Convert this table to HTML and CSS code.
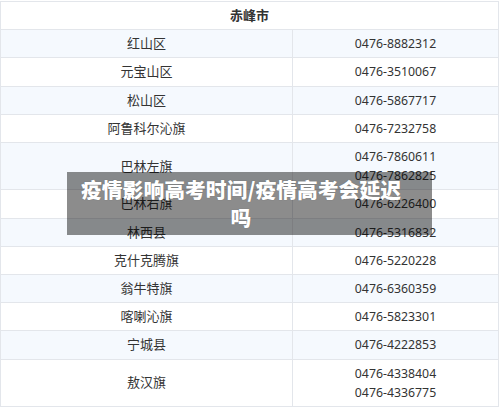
FILE: index.html
```html
<!DOCTYPE html>
<html lang="zh-CN">
<head>
  <meta charset="UTF-8">
  <meta name="viewport" content="width=device-width, initial-scale=1.0">
  <title>疫情影响高考时间/疫情高考会延迟吗</title>
  <link rel="stylesheet" href="styles.css">
</head>
<body>
  <div class="page">
    <table class="tel">
      <thead>
        <tr><th colspan="2">赤峰市</th></tr>
      </thead>
      <tbody>
        <tr><td>红山区</td><td class="num">0476-8882312</td></tr>
        <tr><td>元宝山区</td><td class="num">0476-3510067</td></tr>
        <tr><td>松山区</td><td class="num">0476-5867717</td></tr>
        <tr><td>阿鲁科尔沁旗</td><td class="num">0476-7232758</td></tr>
        <tr><td>巴林左旗</td><td class="num">0476-7860611<br>0476-7862825</td></tr>
        <tr><td>巴林右旗</td><td class="num">0476-6226400</td></tr>
        <tr><td>林西县</td><td class="num">0476-5316832</td></tr>
        <tr><td>克什克腾旗</td><td class="num">0476-5220228</td></tr>
        <tr><td>翁牛特旗</td><td class="num">0476-6360359</td></tr>
        <tr><td>喀喇沁旗</td><td class="num">0476-5823301</td></tr>
        <tr><td>宁城县</td><td class="num">0476-4222853</td></tr>
        <tr><td>敖汉旗</td><td class="num">0476-4338404<br>0476-4336775</td></tr>
      </tbody>
    </table>

    <div class="caption">疫情影响高考时间/疫情高考会延迟吗</div>
  </div>
</body>
</html>
```

FILE: styles.css
```css
body {
  margin: 0;
  background: #fff;
  font-family: "Noto Sans", "Noto Sans CJK SC", sans-serif;
  color: #333;
}
.page {
  position: relative;
  width: 500px;
  height: 409px;
  overflow: hidden;
}
.tel {
  width: 499px;
  margin-top: 1px;
  border-collapse: collapse;
  font-size: 13px;
  line-height: 19.2px;
}
.tel th, .tel td {
  border: 1px solid #e3e6eb;
  padding: 4px 6px;
  text-align: center;
  font-weight: normal;
}
.tel th {
  font-weight: bold;
  background: #fff;
}
.tel td:first-child {
  width: 279px;
}
.tel td.num {
  font-size: 12.3px;
}
.tel tbody tr:nth-child(odd) {
  background: #f5f9fe;
}
.tel tbody tr:nth-child(even) {
  background: #fff;
}
.caption {
  position: absolute;
  left: 67px;
  top: 172px;
  width: 328px;
  height: 57px;
  padding: 3px 27px 3px 10px;
  background: rgba(0, 0, 0, 0.45);
  color: #fff;
  font-family: "Noto Sans CJK SC", sans-serif;
  font-weight: 900;
  font-size: 20.8px;
  line-height: 28px;
  text-align: center;
  text-shadow: 0 0 1px rgba(0, 0, 0, 0.3);
}
```
